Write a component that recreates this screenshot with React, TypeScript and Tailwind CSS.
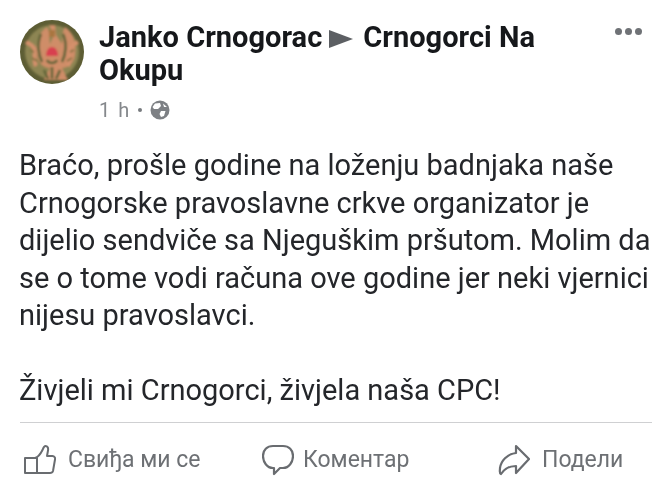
export default function App() {
  return (
    <div className="w-[672px] h-[493px] overflow-hidden bg-white text-[#1c1e21] flex flex-col blur-[0.4px]" style={{ fontFamily: "Roboto, 'Noto Sans', sans-serif" }}>
      <div className="flex pl-[20px] pr-[30px] pt-[20px]">
        <Avatar />
        <div className="ml-[15px] flex-1 pt-[1px]">
          <div className="text-[29px] leading-[32.5px] font-bold text-[#16181b] tracking-[0.02px]">
            Janko Crnogorac
            <svg width="24" height="18" viewBox="0 0 24 18" className="inline-block ml-[7px] mr-[10px] align-[-1px]">
              <path d="M0 0 L24 9 L0 18Z" fill="#5c5f63" />
            </svg>
            Crnogorci Na<br />Okupu
          </div>
          <div className="mt-[10px] flex items-center text-[20px] leading-[28px] text-[#85888c] tracking-[1.5px]">
            <span>1 h</span>
            <span className="ml-[7px] mr-[8px] w-[4px] h-[4px] rounded-full bg-[#777a7e]" />
            <svg width="20" height="20" viewBox="0 0 20 20">
              <circle cx="10" cy="10" r="9.500" fill="#7d8084" />
              <path d="M5 3.500 L10 3 L11 6 L8 9 L4 9 L2.500 7Z M11 11 L15.500 11 L14 16 L11 17 L9.500 14Z M13 3.500 L17 7 L14 7Z" fill="#fff" />
            </svg>
          </div>
        </div>
        <div className="flex gap-[3px] mt-[8px] h-[7px]">
          <span className="w-[7px] h-[7px] rounded-full bg-[#6f7276]" />
          <span className="w-[7px] h-[7px] rounded-full bg-[#6f7276]" />
          <span className="w-[7px] h-[7px] rounded-full bg-[#6f7276]" />
        </div>
      </div>
      <div className="mt-[23px] pl-[19px] text-[29px] leading-[37.5px] text-[#24262a] whitespace-nowrap">
        <p>Braćo, prošle godine na loženju badnjaka naše<br />Crnogorske pravoslavne crkve organizator je<br />dijelio sendviče sa Njeguškim pršutom. Molim da<br />se o tome vodi računa ove godine jer neki vjernici<br />nijesu pravoslavci.</p>
        <p className="mt-[37.5px]">Živjeli mi Crnogorci, živjela naša CPC!</p>
      </div>
      <div className="mt-[12px] ml-[20px] mr-[20px] h-[1px] bg-[#cfd0d2]" />
      <div className="flex items-center pl-[23px] pt-[20px] text-[23px] text-[#6d7074]">
        <div className="flex items-center gap-[12px] w-[239px]">
          <svg width="33" height="32" viewBox="0 0 33 32" fill="none" stroke="#696c70" strokeWidth="2" strokeLinejoin="round" strokeLinecap="round">
            <path d="M2 14h12v15H2z" />
            <path d="M8 14h4c4-1 6-5 7.500-8 1-2.500 1.500-4 3-4 2 0 3 2 2.500 4.500L24 12h5.500c2 0 3 2 2.500 3.500L30 27c-.500 1.500-1.500 2-3 2H8" />
          </svg>
          <span>Свиђа ми се</span>
        </div>
        <div className="flex items-center gap-[9px] w-[236px]">
          <svg width="32" height="32" viewBox="0 0 32 32" fill="none" stroke="#696c70" strokeWidth="2.200" strokeLinejoin="round">
            <path d="M11 2h10c6 0 10 4 10 10s-4 12-10 12h-3l-6 6v-6h-1C5 24 1 18 1 12S5 2 11 2z" />
          </svg>
          <span>Коментар</span>
        </div>
        <div className="flex items-center gap-[12px]">
          <svg width="32" height="32" viewBox="0 0 32 32" fill="none" stroke="#696c70" strokeWidth="2.200" strokeLinejoin="round">
            <path d="M18 2l13 13-13 14v-7c-7 0-11 2-15 8-2-1-1-3-1-6 1-7 7-14 16-15z" />
          </svg>
          <span>Подели</span>
        </div>
      </div>
    </div>
  );
}

function Avatar() {
  return (
    <svg width="64" height="64" viewBox="0 0 64 64" className="shrink-0">
      <defs>
        <clipPath id="c"><circle cx="32" cy="32" r="32" /></clipPath>
        <filter id="b" x="-10%" y="-10%" width="120%" height="120%"><feGaussianBlur stdDeviation="0.900" /></filter>
      </defs>
      <g clipPath="url(#c)">
        <rect width="64" height="64" fill="#5d5d34" />
        <g filter="url(#b)">
          <circle cx="32" cy="32" r="27" fill="#8d8552" />
          <path d="M29 5h6l1 10 6 9c1-6 0-12 3-17 8 5 12 17 10 28-1 9-8 13-13 13l6 12H24l6-12c-5 0-12-4-13-13-2-11 2-23 10-28 3 5 2 11 3 17l4-9z" fill="#cf8d68" />
          <path d="M6 22c3 2 6 2 8 6s-1 12 2 18M58 22c-3 2-6 2-8 6s1 12-2 18" stroke="#d4906c" strokeWidth="4" fill="none" />
          <path d="M21 14c-4 9-3 20 1 28M43 14c4 9 3 20-1 28M27 40c2 4 8 4 10 0M32 47v12M24 50l4 9M40 50l-4 9" stroke="#5f6338" strokeWidth="2.600" fill="none" />
          <path d="M26 36c0-6 3-9 6-9s6 3 6 9z" fill="#d8404f" />
          <path d="M29 10h6v7h-6z" fill="#a9763f" />
          <path d="M12 38l5 3M52 38l-5 3M10 30l4 2M54 30l-4 2" stroke="#7f6f3d" strokeWidth="1.800" />
        </g>
      </g>
    </svg>
  );
}
